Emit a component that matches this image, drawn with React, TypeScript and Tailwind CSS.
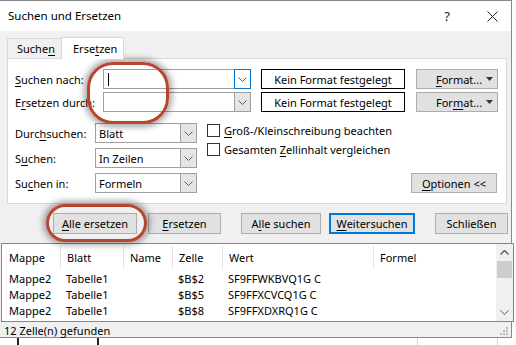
import React from "react";

function M({ children }: { children: React.ReactNode }) {
  return <span className="underline underline-offset-2 decoration-1">{children}</span>;
}

function Chevron({ color = "#606060" }: { color?: string }) {
  return (
    <svg width="9" height="5" viewBox="0 0 9 5">
      <path d="M0.5 0.5 L4.5 4.5 L8.5 0.5" fill="none" stroke={color} strokeWidth="1" />
    </svg>
  );
}

function Combo({ focused, cursor }: { focused?: boolean; cursor?: boolean }) {
  return (
    <div className="flex h-[20px] w-[148px] border border-[#a0a0a0] bg-white">
      <div className="flex flex-1 items-center pl-[4px]">
        {cursor && <div className="h-[13px] w-px bg-black" />}
      </div>
      <div
        className={
          focused
            ? "-my-px -mr-px flex w-[17px] items-center justify-center border border-[#0078d7] bg-white"
            : "flex w-[16px] items-center justify-center border-l border-[#a0a0a0] bg-[#e5e5e5]"
        }
      >
        <Chevron />
      </div>
    </div>
  );
}

function Select({ value }: { value: string }) {
  return (
    <div className="flex h-[20px] w-[102px] border border-[#a0a0a0] bg-white">
      <div className="flex flex-1 items-center pl-[3px]">{value}</div>
      <div className="flex w-[16px] items-center justify-center border-l border-[#a0a0a0] bg-[#e5e5e5]">
        <Chevron />
      </div>
    </div>
  );
}

function FormatButton({ children }: { children: React.ReactNode }) {
  return (
    <div className="flex h-[20px] w-[82px] items-center border border-[#adadad] bg-[#e1e1e1] pl-[19px]">
      <span>{children}</span>
      <svg className="ml-auto mr-[4px]" width="7" height="4" viewBox="0 0 7 4">
        <path d="M0 0 L7 0 L3.5 4 Z" fill="#333" />
      </svg>
    </div>
  );
}

function Button({ w, children, primary }: { w: string; children: React.ReactNode; primary?: boolean }) {
  return (
    <div
      className={
        "flex h-[21px] items-center justify-center bg-[#e1e1e1] " +
        w +
        (primary ? " border-2 border-[#0078d7]" : " border border-[#adadad]")
      }
    >
      {children}
    </div>
  );
}

function Check({ children }: { children: React.ReactNode }) {
  return (
    <div className="flex h-[13px] items-center gap-[4px]">
      <div className="h-[13px] w-[13px] border border-[#333] bg-white" />
      <span>{children}</span>
    </div>
  );
}

const rows = [
  ["Mappe2", "Tabelle1", "", "$B$2", "SF9FFWKBVQ1G C"],
  ["Mappe2", "Tabelle1", "", "$B$5", "SF9FFXCVCQ1G C"],
  ["Mappe2", "Tabelle1", "", "$B$8", "SF9FFXDXRQ1G C"],
];

export default function App() {
  return (
    <div className="relative h-[345px] w-[516px] overflow-hidden bg-white font-['Noto_Sans',sans-serif] text-[11px] leading-none text-black">
      <div className="flex h-[338px] w-[512px] flex-col border-r border-t border-b border-[#8a8a8a]">
        {/* title bar */}
        <div className="flex h-[30px] items-center bg-white pl-[8px]">
          <span className="text-[11.5px]">Suchen und Ersetzen</span>
          <span className="ml-auto mr-[37px] text-[13px] text-[#222]">?</span>
          <svg className="mr-[13px]" width="11" height="11" viewBox="0 0 11 11">
            <path d="M0.5 0.5 L10.5 10.5 M10.5 0.5 L0.5 10.5" stroke="#222" strokeWidth="1" />
          </svg>
        </div>

        <div className="flex flex-1 flex-col bg-[#f0f0f0]">
          {/* tabs */}
          <div className="relative z-10 flex h-[27px] items-end pl-[7px]">
            <div className="flex h-[20px] w-[54px] items-center border-l border-t border-[#d9d9d9] pl-[9px]">
              Suche<M>n</M>
            </div>
            <div className="-mb-px flex h-[22px] w-[63px] items-center border-l border-r border-t border-[#d9d9d9] bg-white pl-[11px]">
              Erse<M>t</M>zen
            </div>
          </div>

          {/* panel */}
          <div className="mx-[7px] flex h-[146px] w-[500px] flex-col border border-[#d9d9d9] bg-white pl-[7px] pt-[10px]">
            <div className="flex h-[20px] items-center">
              <div className="w-[88px]">
                <M>S</M>uchen nach:
              </div>
              <Combo focused cursor />
              <div className="ml-[10px] flex h-[20px] w-[144px] items-center justify-center border border-black">
                Kein Format festgelegt
              </div>
              <div className="ml-[11px]">
                <FormatButton>
                  <M>F</M>ormat...
                </FormatButton>
              </div>
            </div>
            <div className="mt-[3px] flex h-[20px] items-center">
              <div className="w-[88px]">
                E<M>r</M>setzen durch:
              </div>
              <Combo />
              <div className="ml-[10px] flex h-[20px] w-[144px] items-center justify-center border border-black">
                Kein Format festgelegt
              </div>
              <div className="ml-[11px]">
                <FormatButton>
                  For<M>m</M>at...
                </FormatButton>
              </div>
            </div>

            <div className="mt-[11px] flex">
              <div className="flex flex-col gap-[5px]">
                <div className="flex items-center">
                  <div className="w-[80px]">
                    Durc<M>h</M>suchen:
                  </div>
                  <Select value="Blatt" />
                </div>
                <div className="flex items-center">
                  <div className="w-[80px]">
                    S<M>u</M>chen:
                  </div>
                  <Select value="In Zeilen" />
                </div>
                <div className="flex items-center">
                  <div className="w-[80px]">
                    Su<M>c</M>hen in:
                  </div>
                  <Select value="Formeln" />
                </div>
              </div>
              <div className="ml-[10px] flex flex-1 flex-col pr-[9px] pt-px">
                <div className="flex flex-col gap-[6px]">
                  <Check>
                    <M>G</M>roß-/Kleinschreibung beachten
                  </Check>
                  <Check>
                    Gesamten <M>Z</M>ellinhalt vergleichen
                  </Check>
                </div>
                <div className="mt-auto flex justify-end">
                  <div className="flex h-[20px] w-[86px] items-center justify-center border border-[#adadad] bg-[#e1e1e1]">
                    <M>O</M>ptionen &lt;&lt;
                  </div>
                </div>
              </div>
            </div>
          </div>

          {/* buttons */}
          <div className="mt-[9px] flex h-[21px] pl-[53px]">
            <Button w="w-[84px]">
              <M>A</M>lle ersetzen
            </Button>
            <div className="w-[11px]" />
            <Button w="w-[73px]">
              <M>E</M>rsetzen
            </Button>
            <div className="w-[20px]" />
            <Button w="w-[80px]">
              A<M>l</M>le suchen
            </Button>
            <div className="w-[8px]" />
            <Button w="w-[86px]" primary>
              <M>W</M>eitersuchen
            </Button>
            <div className="w-[20px]" />
            <Button w="w-[73px]">Schließen</Button>
          </div>

          {/* results list */}
          <div className="ml-px mt-[9px] flex h-[79px] w-[513px] shrink-0 border border-[#828790] bg-white">
            <div className="flex-1">
              <div className="grid h-[26px] grid-cols-[58px_63px_49px_50px_151px_1fr] items-center">
                {["Mappe", "Blatt", "Name", "Zelle", "Wert", "Formel"].map((h, i) => (
                  <div
                    key={h}
                    className={
                      "flex h-[23px] items-center " +
                      (i === 0 ? "pl-[7px]" : "border-l border-[#e5e5e5] pl-[6px]")
                    }
                  >
                    {h}
                  </div>
                ))}
              </div>
              {rows.map((r, ri) => (
                <div key={ri} className="grid h-[16px] grid-cols-[58px_63px_49px_50px_151px_1fr] items-center">
                  {r.map((c, i) => (
                    <div key={i} className={i === 0 ? "pl-[7px]" : "pl-[6px]"}>
                      {c}
                    </div>
                  ))}
                  <div />
                </div>
              ))}
            </div>
            <div className="flex w-[17px] flex-col items-center bg-[#f0f0f0]">
              <div className="flex h-[17px] items-center justify-center">
                <svg width="9" height="5" viewBox="0 0 9 5">
                  <path d="M0.5 4.5 L4.5 0.5 L8.5 4.5" fill="none" stroke="#606060" strokeWidth="1.5" />
                </svg>
              </div>
              <div className="h-[17px] w-[15px] bg-[#cdcdcd]" />
              <div className="mt-auto flex h-[17px] items-center justify-center">
                <Chevron color="#606060" />
              </div>
            </div>
          </div>

          {/* status */}
          <div className="flex flex-1 items-end pb-[1px] pl-[4px]">
            12 Zelle(n) gefunden
            <svg className="mb-[1px] ml-auto mr-[3px]" width="8" height="8" viewBox="0 0 8 8">
              <rect x="6" y="0" width="2" height="2" fill="#b8b8b8" />
              <rect x="3" y="3" width="2" height="2" fill="#b8b8b8" />
              <rect x="6" y="3" width="2" height="2" fill="#b8b8b8" />
              <rect x="0" y="6" width="2" height="2" fill="#b8b8b8" />
              <rect x="3" y="6" width="2" height="2" fill="#b8b8b8" />
              <rect x="6" y="6" width="2" height="2" fill="#b8b8b8" />
            </svg>
          </div>
        </div>
      </div>

      {/* excel grid below the dialog */}
      <div className="flex h-[7px]">
        <div className="ml-[17px] w-[2px] bg-[#222]" />
        <div className="ml-[78px] w-[2px] bg-[#222]" />
        <div className="ml-[318px] w-px bg-[#d4d4d4]" />
        <div className="ml-[79px] w-px bg-[#d4d4d4]" />
      </div>

      {/* red annotation ellipses */}
      <div className="absolute left-[87px] top-[62px] h-[62px] w-[82px] rounded-[26px] border-[3px] border-[#b8452f] shadow-[0_0_6px_3px_rgba(0,0,0,0.35)]" />
      <div className="absolute left-[46px] top-[204px] h-[38px] w-[101px] rounded-[19px] border-[3px] border-[#b8452f] shadow-[0_0_6px_3px_rgba(0,0,0,0.35)]" />
    </div>
  );
}
